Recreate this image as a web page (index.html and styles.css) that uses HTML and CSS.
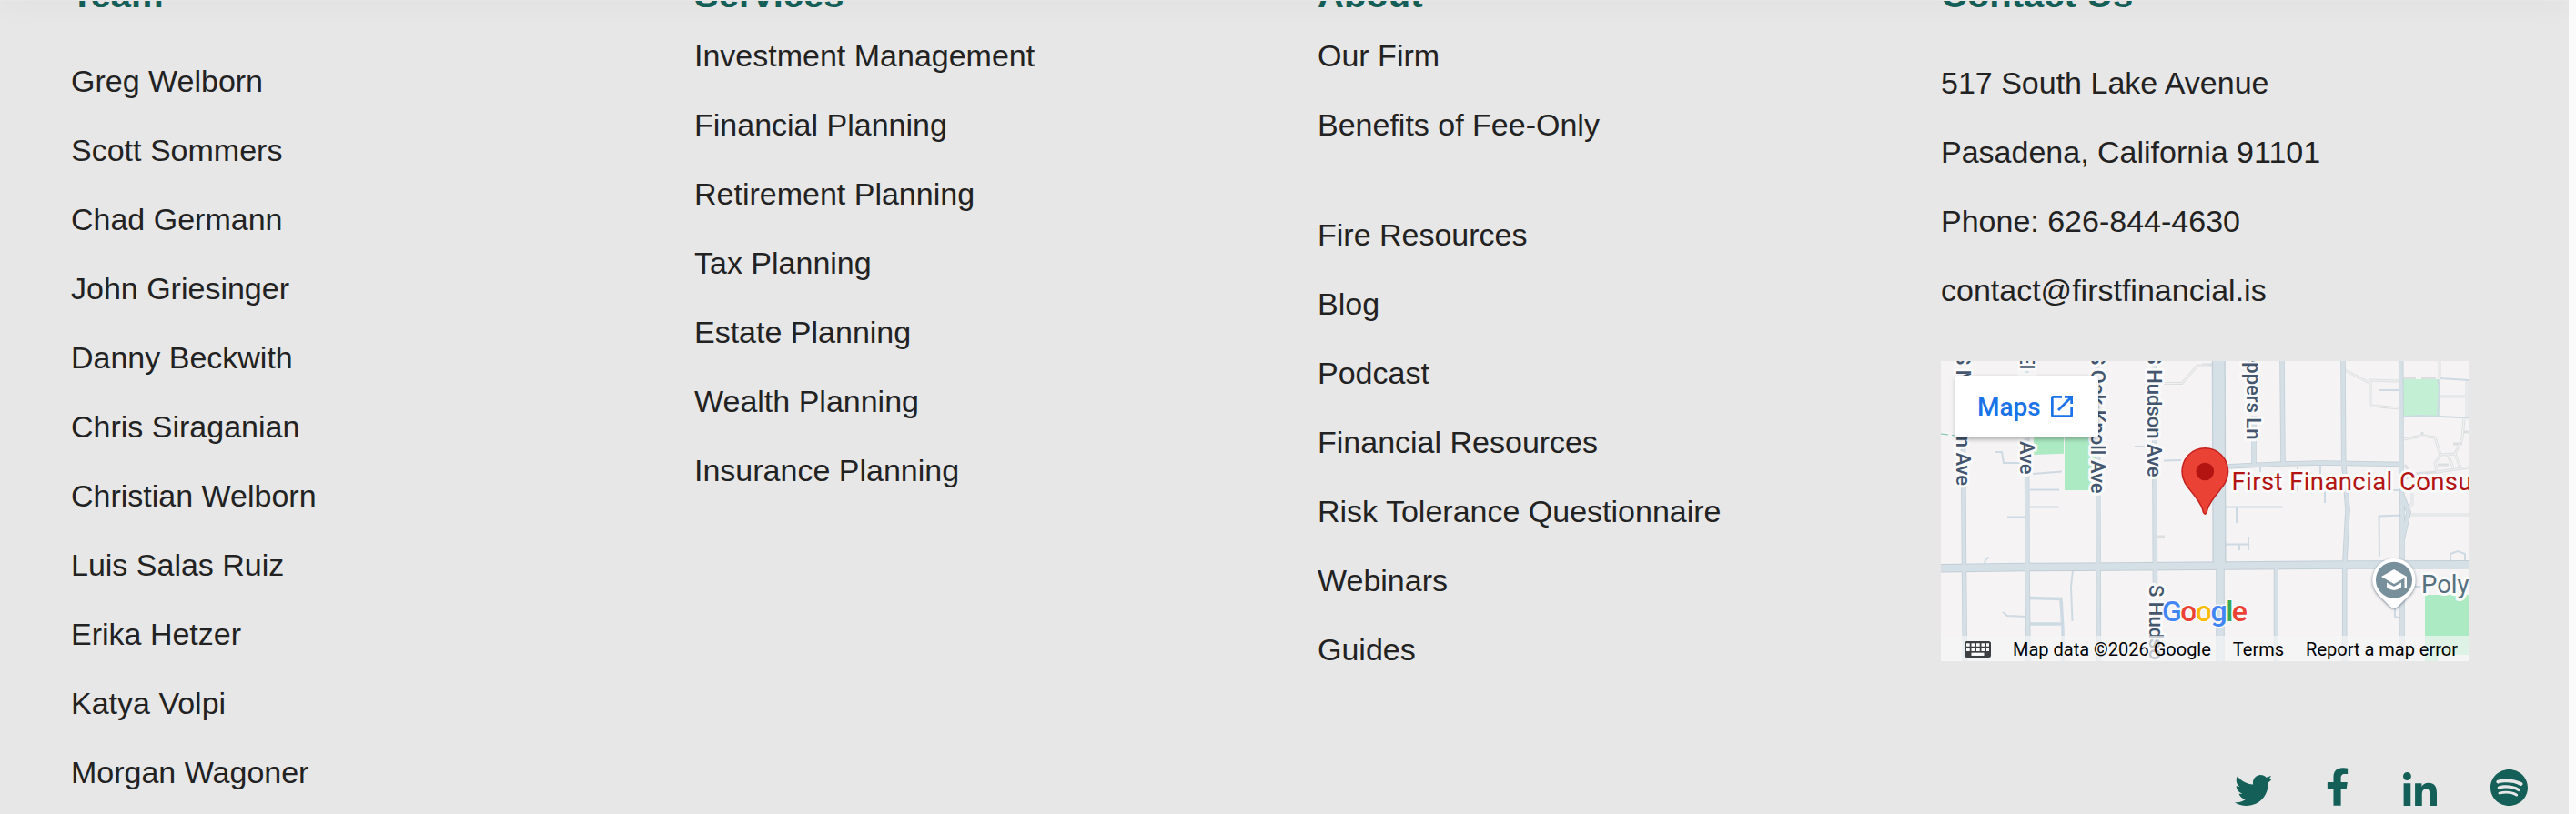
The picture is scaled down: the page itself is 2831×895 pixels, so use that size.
FILE: index.html
```html
<!DOCTYPE html>
<html lang="en">
<head>
<meta charset="UTF-8" />
<meta name="viewport" content="width=device-width, initial-scale=1" />
<title>First Financial Consulting</title>
<link rel="stylesheet" href="styles.css">
</head>
<body>

<!-- Bottom edge of the sticky header -->
<div class="header-edge"></div>

<footer class="site-footer">
  <section class="footer-col team">
    <h3>Team</h3>
    <ul>
      <li>Greg Welborn</li>
      <li>Scott Sommers</li>
      <li>Chad Germann</li>
      <li>John Griesinger</li>
      <li>Danny Beckwith</li>
      <li>Chris Siraganian</li>
      <li>Christian Welborn</li>
      <li>Luis Salas Ruiz</li>
      <li>Erika Hetzer</li>
      <li>Katya Volpi</li>
      <li>Morgan Wagoner</li>
    </ul>
  </section>

  <section class="footer-col">
    <h3>Services</h3>
    <ul>
      <li>Investment Management</li>
      <li>Financial Planning</li>
      <li>Retirement Planning</li>
      <li>Tax Planning</li>
      <li>Estate Planning</li>
      <li>Wealth Planning</li>
      <li>Insurance Planning</li>
    </ul>
  </section>

  <section class="footer-col">
    <h3>About</h3>
    <ul>
      <li>Our Firm</li>
      <li>Benefits of Fee-Only</li>
    </ul>
    <ul class="resources">
      <li>Fire Resources</li>
      <li>Blog</li>
      <li>Podcast</li>
      <li>Financial Resources</li>
      <li>Risk Tolerance Questionnaire</li>
      <li>Webinars</li>
      <li>Guides</li>
    </ul>
  </section>

  <section class="footer-col contact">
    <h3>Contact Us</h3>
    <ul>
      <li>517 South Lake Avenue</li>
      <li>Pasadena, California 91101</li>
      <li>Phone: 626-844-4630</li>
      <li>contact@firstfinancial.is</li>
    </ul>

    <div class="map">
      <svg class="map-canvas" width="580" height="330" viewBox="0 0 580 330">
        <!-- Parks -->
        <path class="park" d="M102 84H135V101.700L102 103ZM136 84H172V142H136ZM532 257H580V323H546V330H532Z" />
        <path class="park light" d="M508 20H548V60H508Z" />

        <!-- Footpaths and driveways -->
        <g class="path-edge">
          <path d="M245 24.500H265L282 5H292M287 4H299M444 10L473 25M472 49V21L503 22M472 49L504 52M548 0V19M508 18.500H522M528 18.500H544M547 39H580M578 21V61M509 86L529 82L543 84L549 103L543 112L545 122M549 103L565 102L573 85L575 64M574 78H580M557 103L563 117M565 102L571 117M545 122L580 117M545 122L520 124L510 130M546 114H558M563 91H573M529 78V83M510 114L515 122M518 145V157L512 162M515 169H580M238 193H246" />
        </g>
        <g class="path-fill">
          <path d="M245 24.500H265L282 5H292M444 10L473 25M472 49V21L503 22M472 49L504 52M548 0V19M547 39H580M578 21V61M509 86L529 82L543 84L549 103L543 112L545 122M549 103L565 102L573 85L575 64M557 103L563 117M565 102L571 117M545 122L580 117M518 145V157L512 162M515 169H580" />
        </g>
        <path class="trail" d="M0 80L8 81M12 81.500L16 82M444 39.500H458" />

        <!-- Small streets -->
        <g class="lane">
          <path d="M59 100H67L69 112H91M213 94H226M245 109.500L264 109M101 124L133 121.500M98 141.500H130M98 160.500H130M73 171.500H94M48 225L49 218L53 216M68 276L73 280L94 281M145 230L143 248L144.500 286" />
          <path d="M482 32H505M548 19L580 21M508 61L530 60L580 62.500M546 20L548 30L546 61M313 160.500H376M325 161V178M351 116V122M392 116V143M417 115V124M422 142V156M493 142H507" />
          <path d="M313 201.500H338M338 193V208M328 202V208M482 215L481.500 170.500L506 169.500M560 223V212L568 209L576 212V223M499 272V281L506 283M516 248H530" />
        </g>
        <path class="lane wide" d="M97 260.500L132 261.500L134 296V330M97 289H133" />

        <!-- Streets: darker casing first, then the fill -->
        <g class="casing">
          <path stroke-width="5.500" d="M24.500 84L25.500 228L26.500 330M94.500 84L95 228L96 330M172.500 84L173.500 330M234.500 0L235.500 250M344 60V115M375 0L376 113M442 0L442.700 112L447 163L443.700 225V330M505.700 0L506 113L507 163V330M506 145L514 166L507.500 195M313 116L375 113L419 112L507 113.600" />
          <path stroke-width="5" d="M368.300 225V330" />
          <path stroke-width="9.500" d="M307 228V330" />
          <path stroke-width="15" d="M305.300 0L306 224" />
          <path stroke-width="9.500" d="M0 227.700L94 226.600L287 225.300L447 224L580 223.700" />
        </g>
        <g class="street">
          <path stroke-width="4" d="M24.500 84L25.500 228L26.500 330M94.500 0L95 228L96 330M172.500 0L173.500 330M234.500 0L235.500 250M344 60V115M375 0L376 113M442 0L442.700 112L447 163L443.700 225V330M505.700 0L506 113L507 163V330M506 145L514 166L507.500 195M313 116L375 113L419 112L507 113.600" />
          <path stroke-width="3.500" d="M368.300 225V330" />
          <path stroke-width="7.500" d="M307 228V330" />
          <path stroke-width="12.500" d="M305.300 0L306 224" />
          <path stroke-width="7.500" d="M0 227.700L94 226.600L287 225.300L447 224L580 223.700" />
        </g>

        <!-- Street names -->
        <g class="street-name">
          <text transform="translate(17 137) rotate(90)" text-anchor="end">S Madison Ave</text>
          <text transform="translate(87 124.500) rotate(90)" text-anchor="end">S El Molino Ave</text>
          <text transform="translate(165 145.500) rotate(90)" text-anchor="end">S Oak Knoll Ave</text>
          <text transform="translate(226.500 127.500) rotate(90)" text-anchor="end">S Hudson Ave</text>
          <text transform="translate(336 86.500) rotate(90)" text-anchor="end">Peppers Ln</text>
          <text transform="translate(228.500 246) rotate(90)">S Hudson Ave</text>
        </g>

        <!-- School pin -->
        <path class="school-pin" d="M498 217A23.700 23.700 0 0 0 481.500 257.700L494 270Q498 273 502 270L514.500 257.700A23.700 23.700 0 0 0 498 217Z" />
        <circle cx="498" cy="240.700" r="20" fill="#78909c" />
        <path fill="#fff" d="M498 229L484 237L498 245L509.500 238.500V249H512V237ZM490 243.500V248.500Q498 255.500 506 248.500V243.500L498 248Z" />
        <text class="place school" x="528" y="255">Polytechnic School</text>

        <!-- Office pin -->
        <path class="office-pin" d="M290.300 95.800C276 95.800 265 107 265 121.500C265 133 272 139 279.500 149C285 156 287.500 161 288.500 166.500Q290.300 170 292.100 166.500C293 161 295.600 156 301 149C308.600 139 315.600 133 315.600 121.500C315.600 107 304.600 95.800 290.300 95.800Z" />
        <circle cx="290.300" cy="121.500" r="9.800" fill="#b31412" />
        <text class="place office" x="319.500" y="141.700">First Financial Consulting</text>

        <text class="google" x="243" y="286" textLength="94"><tspan fill="#4285f4">G</tspan><tspan fill="#ea4335">o</tspan><tspan fill="#fbbc04">o</tspan><tspan fill="#4285f4">g</tspan><tspan fill="#34a853">l</tspan><tspan fill="#ea4335">e</tspan></text>
      </svg>

      <div class="maps-link">
        Maps
        <svg width="24" height="24" viewBox="0 0 24 24" fill="none" stroke="#1a73e8" stroke-width="2.700">
          <path d="M12 1.350H2.500Q1.350 1.350 1.350 2.500V21.500Q1.350 22.650 2.500 22.650H21.500Q22.650 22.650 22.650 21.500V12M15 1.350H22.650V9M22 2L8 16" />
        </svg>
      </div>

      <div class="map-legal">
        <svg width="29" height="18" viewBox="0 0 29 18">
          <rect width="29" height="18" rx="2.500" fill="#3c4043" />
          <path stroke="#fff" stroke-width="3.500" stroke-dasharray="3.700 1.800" d="M2 4H27M2 9.300H27" />
          <path stroke="#fff" stroke-width="3.300" d="M7.500 14.300H21.500" />
        </svg>
        <span class="copyright">Map data ©2026 Google</span>
        <span class="terms">Terms</span>
        <span>Report a map error</span>
      </div>
    </div>

    <div class="social">
      <svg width="41" height="34" viewBox="0 48 512 416" preserveAspectRatio="none"><path d="M459.370 151.716c.325 4.548.325 9.097.325 13.645 0 138.720-105.583 298.558-298.558 298.558-59.452 0-114.680-17.219-161.137-47.106 8.447.974 16.568 1.299 25.340 1.299 49.055 0 94.213-16.568 130.274-44.832-46.132-.975-84.792-31.188-98.112-72.772 6.498.974 12.995 1.624 19.818 1.624 9.421 0 18.843-1.300 27.614-3.573-48.081-9.747-84.143-51.980-84.143-102.985v-1.299c13.969 7.797 30.214 12.670 47.431 13.319-28.264-18.843-46.781-51.005-46.781-87.391 0-19.492 5.197-37.360 14.294-52.954 51.655 63.675 129.300 105.258 216.365 109.807-1.624-7.797-2.599-15.918-2.599-24.040 0-57.828 46.782-104.934 104.934-104.934 30.213 0 57.502 12.670 76.670 33.137 23.715-4.548 46.456-13.320 66.599-25.340-7.798 24.366-24.366 44.833-46.132 57.827 21.117-2.273 41.584-8.122 60.426-16.243-14.292 20.791-32.161 39.308-52.628 54.253z" /></svg>
      <svg width="26" height="42" viewBox="0 0 320 512"><path d="M279.140 288l14.220-92.660h-88.910v-60.130c0-25.350 12.420-50.060 52.240-50.060h40.420V6.260S260.430 0 225.360 0c-73.220 0-121.080 44.380-121.080 124.720v70.620H22.890V288h81.390v224h100.170V288z" /></svg>
      <svg width="37" height="37" viewBox="0 0 448 448"><path d="M100.280 448H7.400V148.900h92.880zM53.790 108.100C24.090 108.100 0 83.500 0 53.800a53.790 53.790 0 0 1 107.580 0c0 29.700-24.100 54.300-53.790 54.300zM447.900 448h-92.680V302.400c0-34.700-.7-79.200-48.290-79.200-48.290 0-55.690 37.700-55.690 76.700V448h-92.780V148.900h89.080v40.800h1.300c12.400-23.500 42.690-48.300 87.880-48.300 94 0 111.280 61.900 111.280 142.300V448z" /></svg>
      <svg width="41" height="40" viewBox="0 8 496 496" preserveAspectRatio="none"><path d="M248 8C111.100 8 0 119.100 0 256s111.100 248 248 248 248-111.100 248-248S384.900 8 248 8zm100.700 364.900c-4.200 0-6.800-1.300-10.700-3.600-62.400-37.600-135-39.200-206.700-24.500-3.900 1-9 2.600-11.900 2.600-9.700 0-15.800-7.700-15.800-15.800 0-10.300 6.100-15.200 13.600-16.800 81.900-18.100 165.600-16.500 237 26.200 6.100 3.900 9.700 7.400 9.700 16.500s-7.100 15.400-15.200 15.400zm26.900-65.600c-5.200 0-8.700-2.300-12.300-4.200-62.500-37-155.700-51.900-238.600-29.400-4.800 1.300-7.400 2.600-11.900 2.600-10.700 0-19.400-8.700-19.400-19.400s5.200-17.800 15.500-20.700c27.800-7.800 56.200-13.600 97.800-13.600 64.900 0 127.600 16.100 177 45.500 8.100 4.800 11.300 11 11.300 19.700-.1 10.800-8.500 19.500-19.400 19.500zm31-76.200c-5.200 0-8.400-1.300-12.900-3.900-71.200-42.500-198.500-52.700-280.900-29.700-3.600 1-8.100 2.600-12.900 2.600-13.200 0-23.300-10.300-23.300-23.600 0-13.600 8.400-21.300 17.400-23.900 35.200-10.300 74.600-15.200 117.500-15.200 73 0 149.500 15.200 205.400 47.800 7.800 4.500 12.900 10.700 12.900 22.600 0 13.600-11 23.300-23.200 23.300z" /></svg>
    </div>
  </section>
</footer>

</body>
</html>
```
FILE: styles.css
```css
* {
  box-sizing: border-box;
}
body {
  margin: 0;
  height: 100vh;
  overflow: hidden;
  background: #fafafa;
  font-family: "Liberation Sans", Arial, sans-serif;
  color: #222;
}

/* Header edge lies over the footer */
.header-edge {
  position: absolute;
  top: 0;
  left: 0;
  width: 2823px;
  height: 1px;
  background: #e7e7e7;
  box-shadow: 0 0 30px 2px rgba(0, 0, 0, 0.12);
  clip-path: inset(0 0 -30px 0);
}

/* Footer */
.site-footer {
  width: 2823px;
  height: 895px;
  padding-left: 78px;
  background: #e7e7e7;
  display: grid;
  grid-template-columns: repeat(3, 685px) 1fr;
  overflow: hidden;
}
.footer-col h3 {
  margin: -30px 0 5px;
  font-size: 40px;
  line-height: 48px;
  color: #146058;
}
.footer-col ul {
  list-style: none;
  margin: 0;
  padding: 0;
}
.footer-col li {
  font-size: 34px;
  line-height: 76px;
}
.footer-col.team h3 {
  margin-bottom: 33px;
}
.footer-col.contact h3 {
  margin-bottom: 35px;
}
.footer-col .resources {
  margin-top: 45px;
}

/* Map */
.map {
  position: relative;
  width: 580px;
  height: 330px;
  margin-top: 40px;
  background: #f5f3f4;
  overflow: hidden;
  font-family: Roboto, sans-serif;
}
.map-canvas {
  display: block;
}
.park {
  fill: #aceac4;
}
.park.light {
  fill: #c3f0d4;
}
.path-edge {
  fill: none;
  stroke: #dcdfe1;
  stroke-width: 3;
}
.path-fill {
  fill: none;
  stroke: #f1f1f2;
  stroke-width: 1.2;
}
.trail {
  stroke: #70c4ac;
  stroke-width: 1.2;
}
.lane {
  fill: none;
  stroke: #cedae3;
  stroke-width: 2;
}
.lane.wide {
  stroke-width: 3.5;
}
.casing {
  fill: none;
  stroke: #c2ced7;
}
.street {
  fill: none;
  stroke: #d5dfe6;
}
.street-name {
  font-size: 22px;
  font-weight: 500;
  fill: #43566d;
}
.street-name text, .place, .google {
  stroke: #fafafa;
  stroke-width: 6px;
  stroke-linejoin: round;
  paint-order: stroke;
}
.place {
  font-size: 27.5px;
}
.office {
  fill: #b31412;
  letter-spacing: 0.4px;
}
.school {
  fill: #567080;
}
.school-pin {
  fill: #fff;
  filter: drop-shadow(0 1px 1.5px rgba(40, 60, 80, 0.6));
}
.office-pin {
  fill: #ea4335;
  stroke: #c5221f;
  stroke-width: 1.5;
}
.google {
  font-size: 32px;
  font-weight: 500;
  stroke-width: 3px;
}

/* Controls over the map */
.maps-link {
  position: absolute;
  top: 16px;
  left: 16px;
  width: 157px;
  height: 68px;
  padding-left: 24px;
  display: flex;
  align-items: center;
  gap: 11px;
  background: #fff;
  border-radius: 3px;
  box-shadow: 0 2px 5px rgba(0, 0, 0, 0.3);
  color: #1a73e8;
  font-size: 28px;
  font-weight: 500;
}
.map-legal {
  position: absolute;
  left: 0;
  right: 0;
  bottom: 0;
  height: 28px;
  padding: 2px 12px 0 26px;
  display: flex;
  align-items: center;
  background: rgba(245, 245, 245, 0.7);
  color: #000;
  font-size: 20px;
  white-space: nowrap;
}
.copyright {
  margin-left: 24px;
}
.terms {
  margin: 0 auto;
}

/* Social links */
.social {
  display: flex;
  justify-content: flex-end;
  align-items: flex-end;
  gap: 59px;
  height: 42px;
  margin: 117px 45px 0 0;
  fill: #146058;
}
```
